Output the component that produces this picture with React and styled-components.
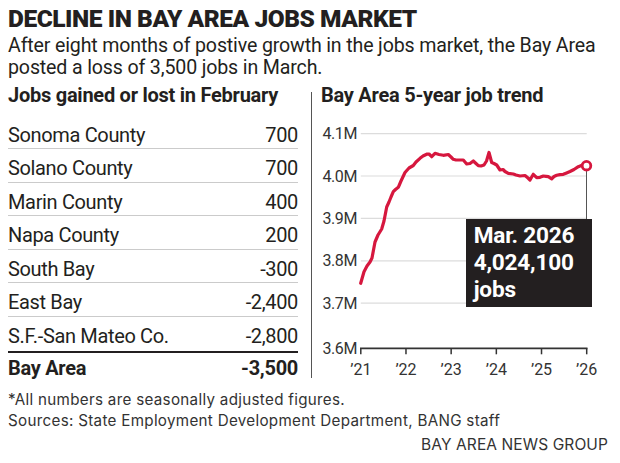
import React from 'react';
import styled, { createGlobalStyle } from 'styled-components';

const Global = createGlobalStyle`
  html, body { margin: 0; padding: 0; background: #fff; }
  body {
    width: 620px; height: 463px; overflow: hidden;
    font-family: Roboto, "Liberation Sans", sans-serif; color: #231f20;
  }
`;

const Page = styled.div`
  width: 620px;
  height: 463px;
  box-sizing: border-box;
  padding: 5px 0 0 8px;
`;

const Title = styled.h1`
  margin: 0;
  font: 900 24.5px/28px Roboto, "Liberation Sans", sans-serif;
  letter-spacing: -0.45px;
  color: #231f20;
  white-space: nowrap;
`;

const Dek = styled.div`
  margin-top: 2px;
  display: flex;
  flex-direction: column;
`;

const DekLine = styled.span`
  display: block;
  height: 21.5px;
  font: 400 19.6px/21.5px Roboto, "Liberation Sans", sans-serif;
  letter-spacing: -0.15px;
  color: #231f20;
  white-space: nowrap;
`;

const Columns = styled.div`
  display: grid;
  grid-template-columns: 290px 14px 308px;
  margin-top: 5px;
`;

const Column = styled.div`
  display: flex;
  flex-direction: column;
  position: relative;
`;

const Divider = styled.div`
  justify-self: end;
  width: 1px;
  background: #555;
  margin: 8.8px 0 4px;
`;

const SectionHead = styled.h2`
  margin: 0;
  height: 24px;
  font: 700 20px/24px Roboto, "Liberation Sans", sans-serif;
  letter-spacing: -0.25px;
  color: #231f20;
  padding-left: ${(p) => p.$indent || 0}px;
  white-space: nowrap;
`;

const Table = styled.div`
  margin-top: 8.6px;
  display: flex;
  flex-direction: column;
`;

const Row = styled.div`
  display: flex;
  justify-content: space-between;
  box-sizing: border-box;
  height: ${(p) => (p.$rule ? 36 : 33.5)}px;
  padding-top: 5px;
  font: 400 20px/28px Roboto, "Liberation Sans", sans-serif;
  letter-spacing: -0.35px;
  border-bottom: ${(p) => (p.$rule ? '2.5px solid #231f20' : '1.5px solid #cbcbcb')};
`;

const TotalRow = styled.div`
  display: flex;
  justify-content: space-between;
  height: 28px;
  padding-top: 1.5px;
  font: 700 20px/28px Roboto, "Liberation Sans", sans-serif;
  letter-spacing: -0.3px;
`;

const ChartWrap = styled.div`
  position: relative;
  width: 308px;
  height: 273px;
  svg { display: block; }
`;

const Callout = styled.div`
  position: absolute;
  left: 153.7px;
  top: 112.3px;
  width: 126.6px;
  height: 88px;
  box-sizing: border-box;
  padding: 3px 0 0 8px;
  background: #231f20;
  color: #fff;
  font: 700 22.6px/27px Roboto, "Liberation Sans", sans-serif;
  letter-spacing: -0.2px;
  white-space: nowrap;
`;

const Notes = styled.div`
  margin-top: 8.4px;
  font: 400 15.2px/20.3px Inter, "Liberation Sans", sans-serif;
  color: #333;
  letter-spacing: 0.3px;
  white-space: nowrap;
`;

const Credit = styled.div`
  margin-top: 3.7px;
  padding-right: 12px;
  text-align: right;
  font: 400 15.5px/20px Inter, "Liberation Sans", sans-serif;
  letter-spacing: 0.1px;
  color: #333;
`;

const rows = [
  ['Sonoma County', '700'],
  ['Solano County', '700'],
  ['Marin County', '400'],
  ['Napa County', '200'],
  ['South Bay', '-300'],
  ['East Bay', '-2,400'],
  ['S.F.-San Mateo Co.', '-2,800'],
];

const grid = [
  { label: '4.1M', y: 133.7 },
  { label: '4.0M', y: 176 },
  { label: '3.9M', y: 218.4 },
  { label: '3.8M', y: 260.8 },
  { label: '3.7M', y: 303.2 },
];

const years = ['21', '22', '23', '24', '25', '26'];
const X0 = 360.8;
const X1 = 586.7;
const AXIS_Y = 348.3;

const pts = [
  [360.7, 283.3], [364, 271.7], [367, 266], [370, 262], [372, 258], [375, 242],
  [378, 235], [381.7, 229], [384, 221], [386.7, 207], [389, 202], [391, 197],
  [393.3, 191.7], [395.5, 189.5], [398.3, 187.3], [401, 181], [405, 172.5],
  [409, 168], [413.3, 165.5], [416, 162], [420, 158.3], [423, 156], [426.7, 154.2],
  [429, 154], [431.7, 156.7], [435, 153.3], [439, 154.5], [443.3, 155.3],
  [448.3, 154.5], [451, 157], [453.3, 159.3], [456, 160], [463.3, 160],
  [466.7, 164], [470, 163.5], [473.3, 161], [476, 163.5], [478.3, 165.7],
  [481, 166], [484, 165], [486.5, 161], [489, 152.5], [491.7, 162.5],
  [494, 163.5], [496.7, 165], [500, 170], [503, 169.5], [505, 171.5],
  [508.3, 173.3], [513.3, 174], [516, 175], [520, 176], [525, 175.5],
  [528, 178], [530, 180], [533.3, 174.3], [536.7, 177.7], [540, 177.3],
  [543.3, 176], [546, 176.3], [548.3, 176.7], [551.7, 178.8], [554, 176.5],
  [556.7, 175.3], [560, 174.6], [563.3, 174.3], [566, 173.2], [570, 171.5],
  [574, 169.5], [578.3, 166.7], [582, 165.3], [586.5, 165.7],
];

const LABEL_FONT = "Roboto, 'Liberation Sans', sans-serif";

function TrendChart() {
  const d = pts.map((p, i) => `${i ? 'L' : 'M'}${p[0]} ${p[1]}`).join(' ');
  const step = (X1 - X0) / 5;
  return (
    <svg width="308" height="273" viewBox="312 107 308 273">
      {grid.map((g) => (
        <g key={g.label}>
          <line x1={X0} x2={X1} y1={g.y} y2={g.y} stroke="#dcdcdc" strokeWidth="1.2" />
          <text x="357" y={g.y + 5.6} textAnchor="end" fontFamily={LABEL_FONT} fontSize="16" letterSpacing="-0.4" fill="#333">
            {g.label}
          </text>
        </g>
      ))}
      <text x="357" y={AXIS_Y + 5.6} textAnchor="end" fontFamily={LABEL_FONT} fontSize="16" letterSpacing="-0.4" fill="#333">
        3.6M
      </text>
      <line x1={X0 - 0.8} x2={X1 + 0.8} y1={AXIS_Y} y2={AXIS_Y} stroke="#333" strokeWidth="1.8" />
      {years.map((yr, i) => {
        const x = X0 + step * i;
        return (
          <g key={yr}>
            <line x1={x} x2={x} y1={AXIS_Y} y2={AXIS_Y + 6} stroke="#333" strokeWidth="1.5" />
            <text x={x} y="374.5" textAnchor="middle" fontFamily={LABEL_FONT} fontSize="16" fill="#333">
              {'\u2019' + yr}
            </text>
          </g>
        );
      })}
      <line x1="586.5" x2="586.5" y1="170" y2="220" stroke="#555" strokeWidth="1" />
      <path d={d} fill="none" stroke="#d6173e" strokeWidth="3.2" strokeLinejoin="round" strokeLinecap="round" />
      <circle cx="586.5" cy="165.7" r="4.3" fill="#fff" stroke="#d6173e" strokeWidth="2.8" />
    </svg>
  );
}

export default function App() {
  return (
    <>
      <Global />
      <Page>
        <Title>DECLINE IN BAY AREA JOBS MARKET</Title>
        <Dek>
          <DekLine>After eight months of postive growth in the jobs market, the Bay Area</DekLine>
          <DekLine>posted a loss of 3,500 jobs in March.</DekLine>
        </Dek>
        <Columns>
          <Column>
            <SectionHead>Jobs gained or lost in February</SectionHead>
            <Table>
              {rows.map(([name, val], i) => (
                <Row key={name} $rule={i === rows.length - 1}>
                  <span>{name}</span>
                  <span>{val}</span>
                </Row>
              ))}
              <TotalRow>
                <span>Bay Area</span>
                <span>-3,500</span>
              </TotalRow>
            </Table>
          </Column>
          <Divider />
          <Column>
            <SectionHead $indent={9}>Bay Area 5-year job trend</SectionHead>
            <ChartWrap>
              <TrendChart />
              <Callout>
                Mar. 2026
                <br />
                4,024,100
                <br />
                jobs
              </Callout>
            </ChartWrap>
          </Column>
        </Columns>
        <Notes>
          *All numbers are seasonally adjusted figures.
          <br />
          Sources: State Employment Development Department, BANG staff
        </Notes>
        <Credit>BAY AREA NEWS GROUP</Credit>
      </Page>
    </>
  );
}
